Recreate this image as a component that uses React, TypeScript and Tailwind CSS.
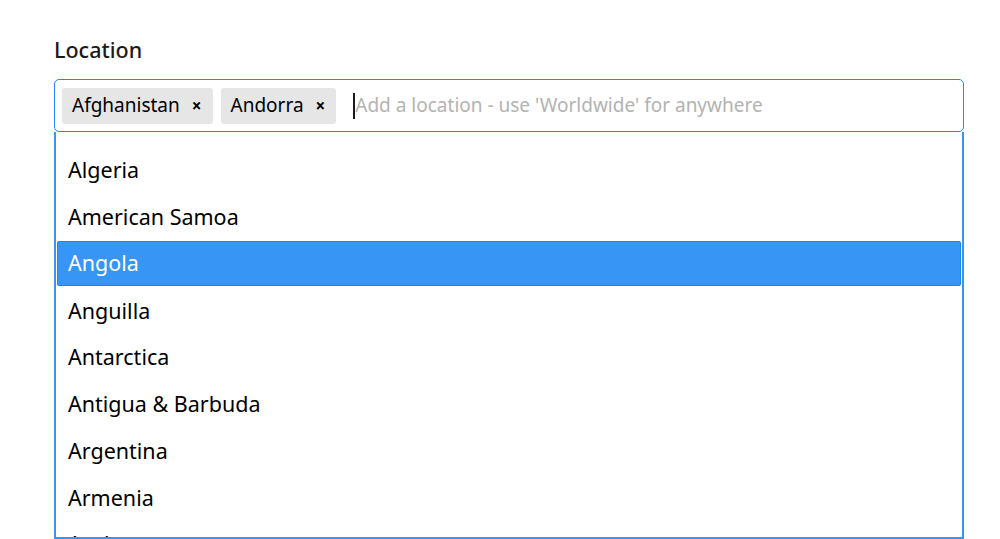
import { useState } from 'react';

const countries = [
  'Algeria',
  'American Samoa',
  'Angola',
  'Anguilla',
  'Antarctica',
  'Antigua & Barbuda',
  'Argentina',
  'Armenia',
  'Aruba',
  'Australia',
];

const selected = ['Afghanistan', 'Andorra'];

export default function App() {
  const [active, setActive] = useState('Angola');

  return (
    <div className="h-[539px] w-[1000px] overflow-hidden bg-white pl-[54px] pr-[36px] pt-[35px] font-['Noto_Sans',sans-serif] text-black">
      <label className="block text-[21.5px] font-medium leading-[30px] text-[#1a1a1a]">Location</label>

      <div className="mt-[14px] flex h-[53px] items-center gap-2 rounded-[5px] border border-[#2684ff] px-[7px]">
        {selected.map((name) => (
          <div key={name} className="flex h-[36px] items-center rounded-[3px] bg-[#e6e6e6] pl-[10px] pr-[11px] text-[19px]">
            <span>{name}</span>
            <span className="ml-[12px] text-[17px] font-bold leading-none">×</span>
          </div>
        ))}
        <div className="ml-[9px] flex h-[26px] items-center">
          <span className="h-[26px] w-[2px] bg-[#1a1a1a]" />
          <span className="text-[19px] text-[#b3b3b3]">Add a location - use 'Worldwide' for anywhere</span>
        </div>
      </div>

      <div className="h-[407px] overflow-hidden border-x-2 border-b-2 border-[#3795f5] px-px pt-[15px]">
        {countries.map((name) => (
          <div
            key={name}
            onMouseEnter={() => setActive(name)}
            className={
              name === active
                ? 'mb-px flex h-[45.75px] items-center rounded-[2px] border border-[#1f84ec] bg-[#3795f5] pl-[10px] text-[21.5px] text-white'
                : 'flex h-[46.75px] items-center pl-[11px] text-[21.5px]'
            }
          >
            {name}
          </div>
        ))}
      </div>
    </div>
  );
}
